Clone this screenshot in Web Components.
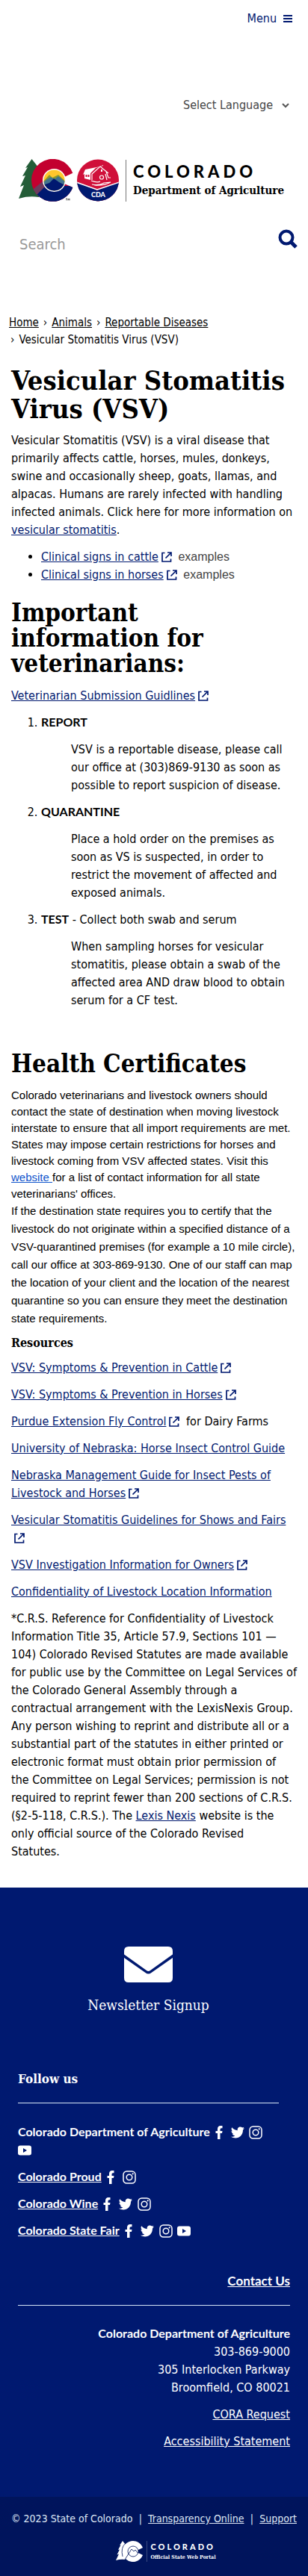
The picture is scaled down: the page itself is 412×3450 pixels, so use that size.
<!DOCTYPE html>
<html lang="en">
<head>
<meta charset="utf-8">
<meta name="viewport" content="width=device-width, initial-scale=1">
<title>Vesicular Stomatitis Virus (VSV)</title>
<style>
  body {
    display: flex;
    flex-direction: column;
    min-height: 100vh;
    margin: 0;
    background: #fff;
    color: #000;
    font: 16px/24px "DejaVu Sans Condensed", "Noto Sans", sans-serif;
    --navy: #001970;
    --navy-deep: #00145c;
    --slab: "DejaVu Serif Condensed", "DejaVu Serif", serif;
    --strong: Lato, "Open Sans", sans-serif;
  }
  legal-bar { flex: 1; }
</style>
</head>
<body>
<site-header></site-header>
<bread-crumbs></bread-crumbs>
<vsv-article></vsv-article>
<site-footer></site-footer>
<legal-bar></legal-bar>

<script>
function define(name, html) {
  const template = document.createElement('template');
  template.innerHTML = html;
  customElements.define(name, class extends HTMLElement {
    constructor() {
      super();
      this.attachShadow({ mode: 'open' }).append(template.content.cloneNode(true));
    }
    connectedCallback() {
      const link = this.shadowRoot.querySelector('a[data-host]');
      if (link) link.setAttribute('href', this.getAttribute('href') || '#');
    }
  });
}

/* Link that opens elsewhere, followed by an arrow-out-of-box icon */
define('ext-link', `
<style>
  :host { display: inline; }
  a { color: var(--navy); }
  svg { width: 14px; height: 14px; margin: 0 4px; vertical-align: -2px; fill: none; stroke: var(--navy); stroke-width: 1.7; }
</style><a data-host><slot></slot></a><svg viewBox="0 0 14 14" aria-hidden="true"><path d="M4.500 1.500H1V13h11.500V9.500M8 1h5v5M13 1L5.500 8.500"/></svg>`);

define('agency-logo', `
<style>
  :host { display: block; }
  .row { display: flex; align-items: center; color: #000; text-decoration: none; }
  svg { width: 136px; height: 58px; flex: none; }
  .words { border-left: 1px solid #777; margin-left: 7px; padding-left: 9px; height: 56px; display: flex; flex-direction: column; justify-content: center; }
  .state { font: 900 22px/26px Lato, sans-serif; letter-spacing: 5px; }
  .dept { font: bold 15px/24px var(--slab); white-space: nowrap; }
</style>
<a class="row" href="#">
  <svg viewBox="0 0 136 58" role="img" aria-label="Colorado Department of Agriculture logo">
    <defs>
      <clipPath id="ring"><path d="M72.300 18.700A28.500 28.500 0 1 0 72.300 38L60 32.500H56V24.500H60Z"/></clipPath>
      <clipPath id="sun"><circle cx="47.500" cy="28.500" r="14"/></clipPath>
      <clipPath id="seal"><circle cx="106" cy="28.500" r="28"/></clipPath>
    </defs>
    <path fill="#245d38" d="M17.500 0L9 12l3-1L5 23l4-1L2 37l5-2L0 53q13-4 27-2V12z"/>
    <g clip-path="url(#ring)">
      <path fill="#c3002f" d="M15 0h60v58H15z"/>
      <path fill="#6d3a5d" d="M15 44L32 30l6 14-14 8z"/>
      <path fill="#001970" d="M22 50L36 36h40v22H22z"/>
    </g>
    <circle cx="47.500" cy="28.500" r="15.500" fill="#fff"/>
    <g clip-path="url(#sun)">
      <path fill="#ffc72c" d="M30 10h36v40H30z"/>
      <path fill="#8a9a2c" d="M32 31l9-10 4 4 8-4 12 11v4H32z"/>
      <path fill="#41748d" d="M32 32l6-5 5-3 5 3 5-4 12 10v4H32z"/>
      <path fill="#001970" d="M32 35l9-3 6-6 7 5 10 5v12H32z"/>
    </g>
    <path stroke="#333" stroke-width=".7" fill="none" d="M63 53h2m-1 0v2.500m2 0V53l1 1.500 1-1.500v2.500"/>
    <g clip-path="url(#seal)">
      <path fill="#d0103a" d="M78 0h56v58H78z"/>
      <path fill="#001970" d="M78 31l27 11 29-11v27H78z"/>
      <path fill="none" stroke="#fff" stroke-width="1.500" d="M77 31l28 10 30-10"/>
    </g>
    <path fill="#fff" d="M89 14l20-4 4-2v1l-10 3-7 7v9l-8-2v-6l-2 1z"/>
    <path fill="#d0103a" d="M89.500 21h2v3h-2zm3 0h2v3h-2z"/>
    <path fill="none" stroke="#fff" stroke-width="1.200" d="M98 28v-8l11-10 11 9M117 17l3 8h3m-7-5l2 8M97 29q8 3 12 1m-11 4q9 2 16-2l9-1q-9 5-22 4"/>
    <circle cx="111" cy="24.500" r="2.500" fill="none" stroke="#fff" stroke-width="1.200"/>
    <path fill="#fff" d="M110 14h2v3h-2z"/>
    <text x="106.500" y="51" text-anchor="middle" fill="#fff" font-family="Lato" font-weight="900" font-size="9">CDA</text>
  </svg>
  <span class="words"><span class="state">COLORADO</span><span class="dept">Department of Agriculture</span></span>
</a>`);

define('site-header', `
<style>
  :host { display: block; }
  .menu { display: flex; justify-content: flex-end; padding: 13px 20px 0 0; }
  .menu button { display: flex; align-items: center; gap: 8px; padding: 0; border: 0; background: none; color: var(--navy); font: inherit; }
  .menu svg { width: 14px; height: 12px; fill: var(--navy); }
  .lang { display: grid; justify-content: end; padding: 92px 24px 0 0; }
  .lang > * { grid-area: 1 / 1; }
  select { appearance: none; border: 0; height: 24px; padding: 0 22px 0 0; background: none; color: #444; font: inherit; }
  .lang svg { width: 12px; height: 8px; justify-self: end; align-self: center; fill: none; stroke: #555; stroke-width: 2; pointer-events: none; }
  agency-logo { padding: 60px 16px 0 25px; }
  form { display: flex; padding: 36px 14px 0 26px; align-items: flex-start; }
  input { flex: 1; min-width: 0; height: 40px; padding: 0; border: 0; background: none; font: inherit; font-size: 20px; }
  input::placeholder { color: #999; opacity: 1; }
  form button { padding: 0; border: 0; background: none; height: 26px; }
  form svg { display: block; width: 26px; height: 26px; fill: none; stroke: var(--navy); }
</style>
<div class="menu"><button type="button">Menu <svg viewBox="0 0 14 12" aria-hidden="true"><path d="M1 1h12v2H1zm0 4h12v2H1zm0 4h12v2H1z"/></svg></button></div>
<div class="lang">
  <select aria-label="Select Language"><option>Select Language</option></select>
  <svg viewBox="0 0 12 8" aria-hidden="true"><path d="M2 2l4 4 4-4"/></svg>
</div>
<agency-logo></agency-logo>
<form onsubmit="return false">
  <input type="search" placeholder="Search" aria-label="Search">
  <button aria-label="Submit search"><svg viewBox="0 0 26 26"><circle cx="11" cy="11" r="8.500" stroke-width="4"/><path d="M17 17l7 7" stroke-width="5"/></svg></button>
</form>`);

define('bread-crumbs', `
<style>
  :host { display: block; padding: 74px 12px 0; font-size: 15px; line-height: 23px; }
  ol { display: flex; flex-wrap: wrap; margin: 0; padding: 0; list-style: none; }
  a { color: inherit; }
  li + li::before { content: "›"; padding: 0 6px; }
  li:last-child::before { padding-left: 2px; }
</style>
<nav aria-label="Breadcrumb"><ol>
  <li><a href="#">Home</a></li><li><a href="#">Animals</a></li><li><a href="#">Reportable Diseases</a></li><li>Vesicular Stomatitis Virus (VSV)</li>
</ol></nav>`);

define('vsv-article', `
<style>
  :host { display: block; padding: 23px 15px 36px; }
  h1, h2, h3, p { margin: 0; }
  h1, h2, h3 { font-family: var(--slab); font-weight: bold; }
  h1 { font-size: 36px; line-height: 38px; margin-bottom: 12px; }
  h2 { font-size: 33px; line-height: 34px; margin: 22px 0 14px; max-width: 320px; }
  h3 { font-size: 16px; line-height: 24px; margin: 9px 0; }
  p { margin-bottom: 12px; }
  p:last-child { margin-bottom: 0; }
  a { color: var(--navy); }
  ul, ol { margin: 0; padding-left: 40px; }
  ul span { font-family: "Liberation Sans", sans-serif; line-height: 16px; color: #444; }
  strong { font-family: var(--strong); line-height: 16px; }
  blockquote { margin: 12px 12px 12px 40px; }
  h2.late { margin-top: 56px; max-width: none; }
  .plain { margin: 0; font-family: "Liberation Sans", sans-serif; font-size: 15px; }
  .tight { line-height: 22px; }
  .tight a { color: #1155cc; }
</style>
<main>
  <h1>Vesicular Stomatitis Virus (VSV)</h1>
  <p>Vesicular Stomatitis (VSV) is a viral disease that primarily affects cattle, horses, mules, donkeys, swine and occasionally sheep, goats, llamas, and alpacas. Humans are rarely infected with handling infected animals. Click here for more information on <a href="#">vesicular stomatitis</a>.</p>
  <ul>
    <li><ext-link>Clinical signs in cattle</ext-link> <span>examples</span></li>
    <li><ext-link>Clinical signs in horses</ext-link> <span>examples</span></li>
  </ul>
  <h2>Important information for veterinarians:</h2>
  <p><ext-link>Veterinarian Submission Guidlines</ext-link></p>
  <ol>
    <li><strong>REPORT</strong><blockquote>VSV is a reportable disease, please call our office at (303)869-9130 as soon as possible to report suspicion of disease.</blockquote></li>
    <li><strong>QUARANTINE</strong><blockquote>Place a hold order on the premises as soon as VS is suspected, in order to restrict the movement of affected and exposed animals.</blockquote></li>
    <li><strong>TEST</strong> - Collect both swab and serum<blockquote>When sampling horses for vesicular stomatitis, please obtain a swab of the affected area AND draw blood to obtain serum for a CF test.</blockquote></li>
  </ol>
  <h2 class="late">Health Certificates</h2>
  <p class="plain tight">Colorado veterinarians and livestock owners should contact the state of destination when moving livestock interstate to ensure that all import requirements are met. States may impose certain restrictions for horses and livestock coming from VSV affected states. Visit this <a href="#">website </a>for a list of contact information for all state veterinarians' offices.</p>
  <p class="plain">If the destination state requires you to certify that the livestock do not originate within a specified distance of a VSV-quarantined premises (for example a 10 mile circle), call our office at 303-869-9130. One of our staff can map the location of your client and the location of the nearest quarantine so you can ensure they meet the destination state requirements.</p>
  <h3>Resources</h3>
  <p><ext-link>VSV: Symptoms &amp; Prevention in Cattle</ext-link></p>
  <p><ext-link>VSV: Symptoms &amp; Prevention in Horses</ext-link></p>
  <p><ext-link>Purdue Extension Fly Control</ext-link> for Dairy Farms</p>
  <p><a href="#">University of Nebraska: Horse Insect Control Guide</a></p>
  <p><ext-link>Nebraska Management Guide for Insect Pests of Livestock and Horses</ext-link></p>
  <p><ext-link>Vesicular Stomatitis Guidelines for Shows and Fairs</ext-link></p>
  <p><ext-link>VSV Investigation Information for Owners</ext-link></p>
  <p><a href="#">Confidentiality of Livestock Location Information</a></p>
  <p>*C.R.S. Reference for Confidentiality of Livestock Information Title 35, Article 57.9, Sections 101 — 104) Colorado Revised Statutes are made available for public use by the Committee on Legal Services of the Colorado General Assembly through a contractual arrangement with the LexisNexis Group. Any person wishing to reprint and distribute all or a substantial part of the statutes in either printed or electronic format must obtain prior permission of the Committee on Legal Services; permission is not required to reprint fewer than 200 sections of C.R.S. (§2-5-118, C.R.S.). The <a href="#">Lexis Nexis</a> website is the only official source of the Colorado Revised<br>Statutes.</p>
</main>`);

const SOCIAL = {
  facebook: '<path d="M7 18v-8H4.500V7H7V4.500Q7 0 11 0h2.500v3.200H12q-1.500 0-1.500 1.500V7h3l-.5 3h-2.500v8z"/>',
  twitter: '<path d="M18 3.500l-2 2C16.200 12 11.500 16.500 6 16.500c-2.200 0-4-.6-6-1.700 2 .2 4-.4 5.300-1.500-1.700-.1-3-1.200-3.500-2.600h1.600C1.600 10.200.5 8.800.500 7l1.600.4C.5 6.200.1 4 1.200 2.300 3.200 4.700 5.800 6 8.800 6.200 8.200 3.500 10.200 1.500 12.500 1.500c1 0 2 .4 2.700 1.100l2.300-.9-1.500 2z"/>',
  instagram: '<rect x="1" y="1" width="16" height="16" rx="4.500" fill="none" stroke="#fff" stroke-width="1.500"/><circle cx="9" cy="9" r="3.800" fill="none" stroke="#fff" stroke-width="1.500"/><circle cx="13.700" cy="4.300" r="1.100"/>',
  youtube: '<path fill-rule="evenodd" d="M3 2.500h12q3 0 3 3v7q0 3-3 3H3q-3 0-3-3v-7q0-3 3-3zM7 6v6l5-3z"/>'
};

/* Account name followed by one icon link per network listed in "networks" */
customElements.define('social-row', class extends HTMLElement {
  constructor() {
    super();
    this.attachShadow({ mode: 'open' });
  }
  connectedCallback() {
    const icons = this.getAttribute('networks').split(' ')
      .map(n => `<a class="icon ${n}" href="#" aria-label="${n}"><svg viewBox="0 0 18 18">${SOCIAL[n]}</svg></a>`).join(' ');
    const name = this.hasAttribute('linked') ? '<a href="#"><slot></slot></a>' : '<slot></slot>';
    this.shadowRoot.innerHTML = `
<style>
  :host { display: block; margin-bottom: 12px; font-family: var(--strong); font-weight: bold; }
  a { color: inherit; }
  .icon { display: inline-block; width: 18px; height: 18px; margin-right: 3px; vertical-align: -4px; }
  .facebook { margin-left: 3px; }
  svg { display: block; width: 18px; height: 18px; fill: #fff; }
</style>${name}${icons}`;
  }
});

define('site-footer', `
<style>
  :host { display: block; padding: 79px 24px 62px; background: var(--navy); color: #fff; }
  a { color: inherit; }
  .left { margin-right: 15px; }
  .news { display: flex; flex-direction: column; align-items: center; gap: 18px; text-decoration: none; font: 19px/24px var(--slab); }
  .news svg { width: 65px; height: 48px; fill: #fff; }
  h2 { margin: 75px 0 0; font: bold 17px/24px var(--slab); }
  hr { margin: 20px 0 26px; border: 0; border-top: 1px solid #d5e4f5; }
  .right { margin-top: 44px; text-align: right; }
  .contact { display: block; font: bold 17px/24px var(--strong); }
  p { margin: 0 0 12px; }
  p:last-child { margin-bottom: 0; }
  strong { font-family: var(--strong); line-height: 16px; }
</style>
<footer>
  <section class="left">
    <a class="news" href="#"><svg viewBox="0 0 65 48" aria-hidden="true"><path d="M6 0h53q6 0 6 6v4.500L35 32q-2.500 2-5 0L0 10.500V6q0-6 6-6zM0 15l28.500 20q4 3 8 0L65 15v27q0 6-6 6H6q-6 0-6-6z"/></svg>Newsletter Signup</a>
    <h2>Follow us</h2>
    <hr>
    <social-row networks="facebook twitter instagram youtube">Colorado Department of Agriculture</social-row>
    <social-row linked networks="facebook instagram">Colorado Proud</social-row>
    <social-row linked networks="facebook twitter instagram">Colorado Wine</social-row>
    <social-row linked networks="facebook twitter instagram youtube">Colorado State Fair</social-row>
  </section>
  <section class="right">
    <a class="contact" href="#">Contact Us</a>
    <hr>
    <p><strong>Colorado Department of Agriculture</strong><br>303-869-9000<br>305 Interlocken Parkway<br>Broomfield, CO 80021</p>
    <p><a href="#">CORA Request</a></p>
    <p><a href="#">Accessibility Statement</a></p>
  </section>
</footer>`);

define('legal-bar', `
<style>
  :host { display: block; padding: 18px 15px 16px; background: var(--navy-deep); color: #dfe8f5; font-size: 14px; line-height: 22px; }
  a { color: inherit; }
  .links { display: flex; justify-content: space-between; white-space: nowrap; }
  .mark { display: flex; justify-content: center; align-items: center; margin-top: 18px; padding-left: 32px; color: #fff; text-decoration: none; }
  svg { width: 36px; height: 30px; }
  .words { display: flex; flex-direction: column; margin-left: 5px; padding-left: 4px; border-left: 1px solid #3a4a80; }
  .state { font: 900 11px/15px Lato, sans-serif; letter-spacing: 3px; }
  .tag { font: bold 7px/13px var(--slab); }
</style>
<div class="links"><span>© 2023 State of Colorado</span><span>|</span><a href="#">Transparency Online</a><span>|</span><a href="#">Support</a></div>
<a class="mark" href="#">
  <svg viewBox="0 0 36 30" aria-hidden="true">
    <path fill="#fff" d="M9 1L5 7l1.500-.5L3 13l2-.5-3.500 7 2.500-1L0 27q6-2 13-1V6z"/>
    <path fill="#fff" d="M36 10A14 14 0 1 0 36 20l-6-3v-4z"/>
    <g fill="none" stroke="#00145c" stroke-width=".8"><circle cx="23" cy="15" r="7"/><path d="M9 22q-3-12 4-18M12 26l9-14 3 3 2-2 4 5"/></g>
  </svg>
  <span class="words"><span class="state">COLORADO</span><span class="tag">Official State Web Portal</span></span>
</a>`);
</script>
</body>
</html>
